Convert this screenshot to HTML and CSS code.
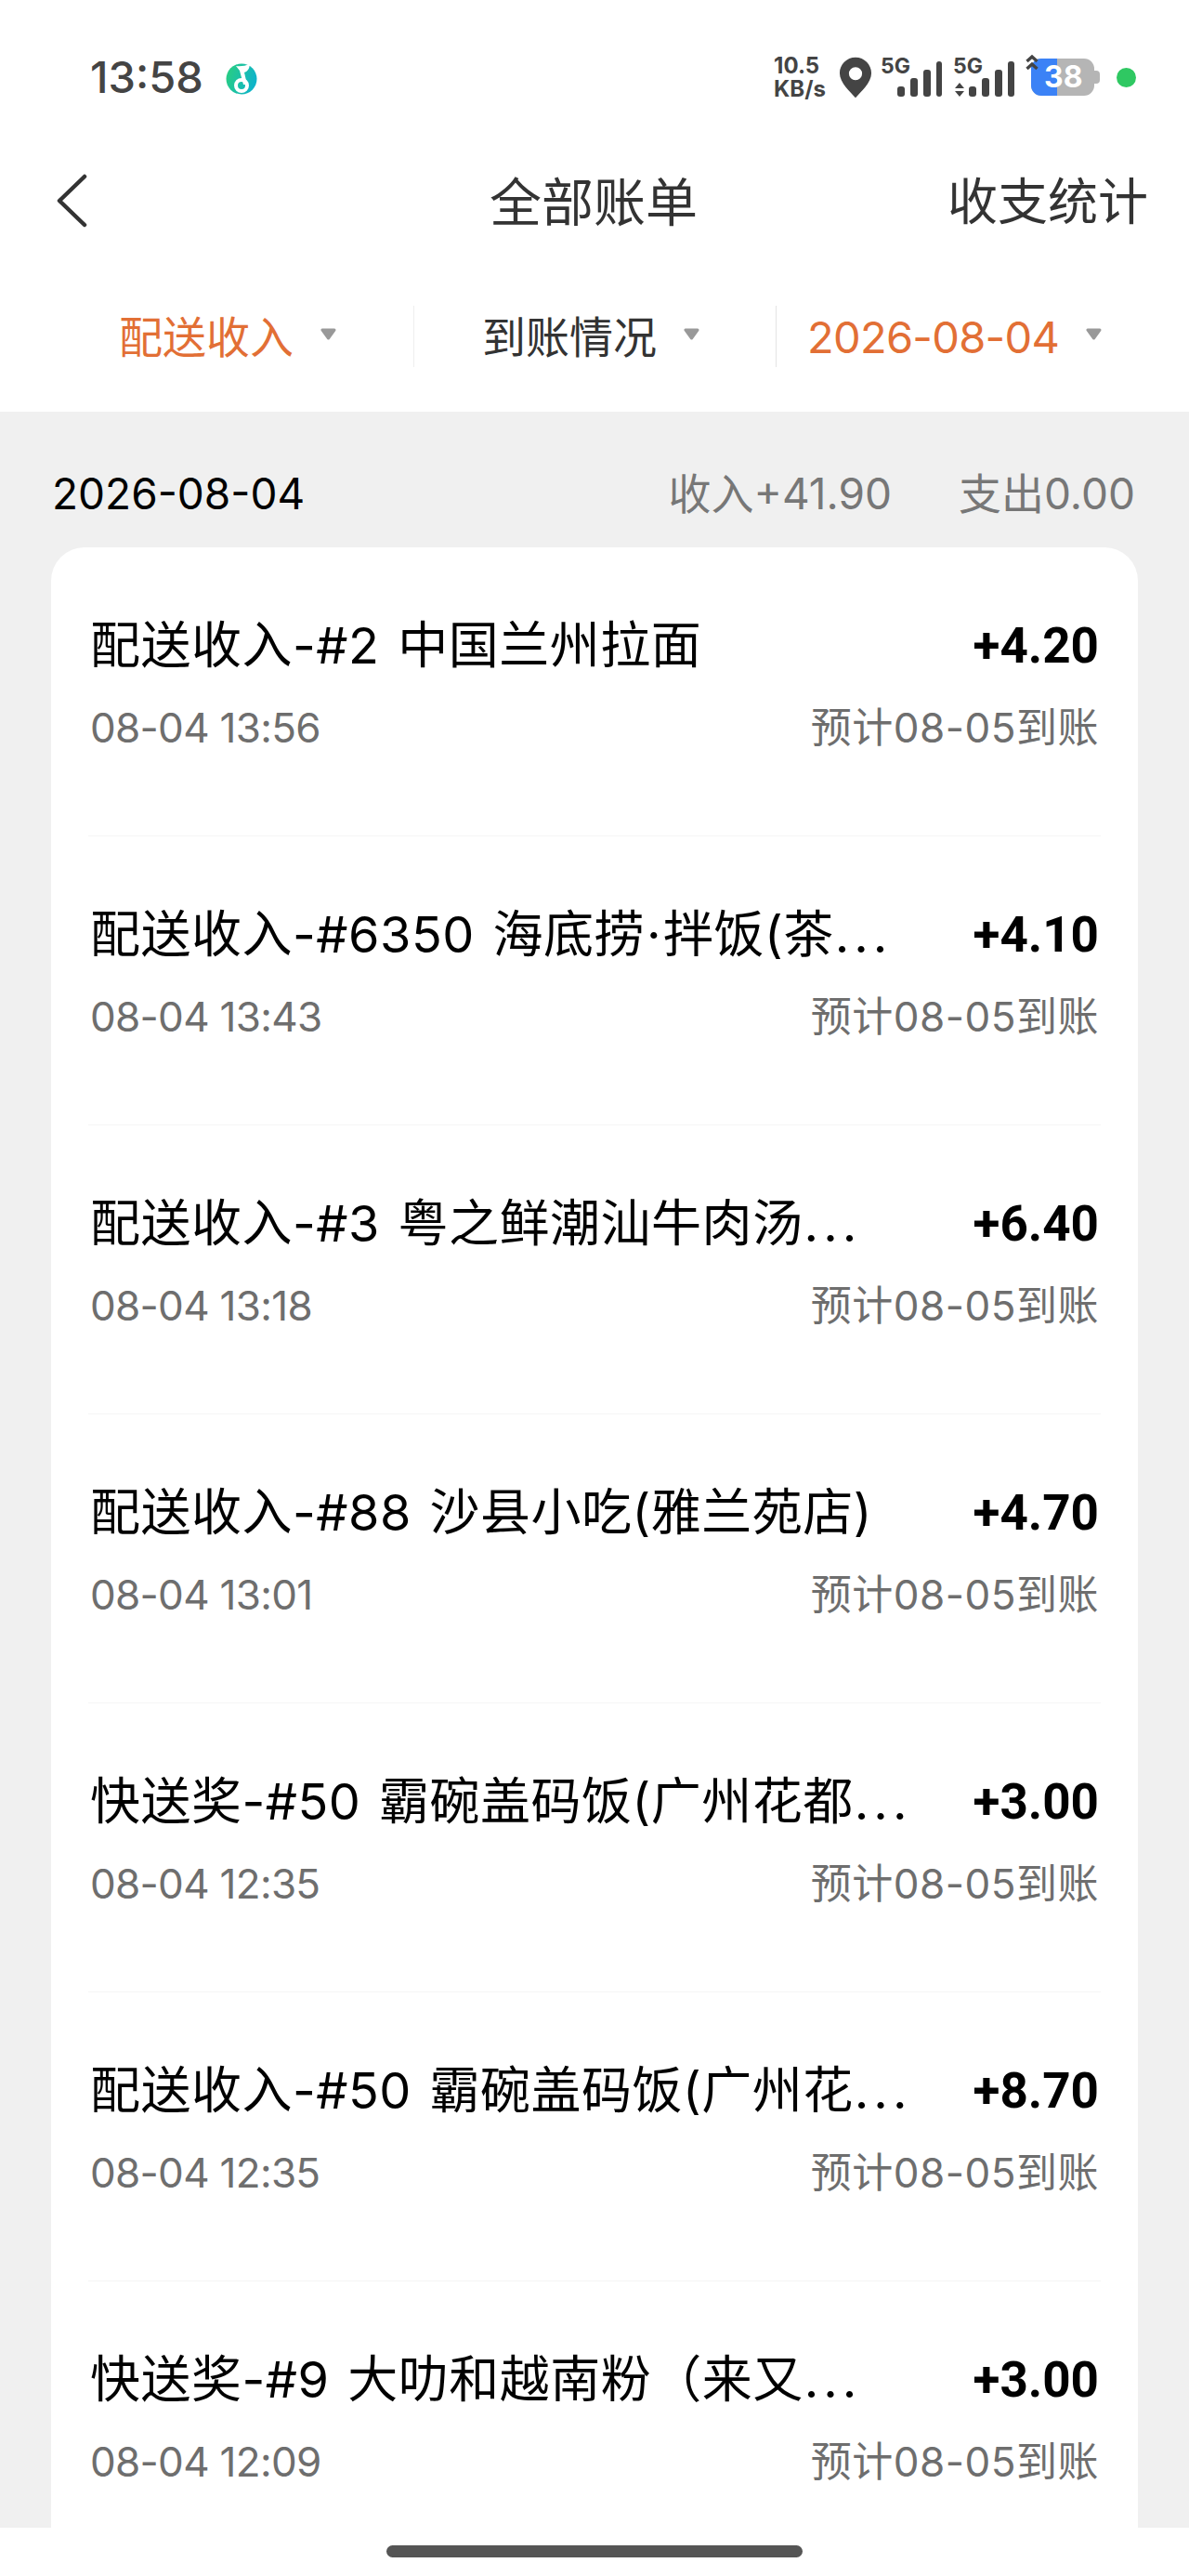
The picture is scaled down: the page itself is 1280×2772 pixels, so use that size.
FILE: index.html
```html
<!DOCTYPE html>
<html lang="zh-CN">
<head>
  <meta charset="UTF-8" />
  <title>全部账单</title>
  <link rel="stylesheet" href="styles.css">
</head>
<body>
  <div class="statusbar">
    <div class="status-left">
      <span class="clock">13:58</span>
      <svg class="music" width="34" height="34" viewBox="0 0 34 34">
        <defs>
          <linearGradient id="mg" x1="0" y1="0" x2="1" y2="0.3">
            <stop offset="0" stop-color="#2bd07c"/>
            <stop offset="1" stop-color="#0fb4c8"/>
          </linearGradient>
        </defs>
        <circle cx="17" cy="17" r="16.500" fill="url(#mg)"/>
        <circle cx="17" cy="24" r="6" fill="none" stroke="#fff" stroke-width="4"/>
        <path d="M11 3 Q18 4 26 1 Q25 9 20 10 L23 23 L19 23 L15 8 Z" fill="#fff"/>
      </svg>
    </div>
    <div class="status-right">
      <div class="speed"><span>10.5</span><span>KB/s</span></div>
      <svg class="pin" width="36" height="47" viewBox="0 0 38 48">
        <path fill-rule="evenodd" fill="#444" d="M19 1C9 1 1 9 1 19c0 11 12 21 18 28 6-7 18-17 18-28C37 9 29 1 19 1Zm0 11a7.500 7.500 0 1 1 0 15 7.500 7.500 0 0 1 0-15Z"/>
      </svg>
      <div class="signal">
        <span class="net">5G</span>
        <svg width="66" height="41" viewBox="0 0 66 41" fill="#444">
          <rect x="18" y="30" width="8" height="11" rx="3"/>
          <rect x="32" y="21" width="8" height="20" rx="3"/>
          <rect x="46" y="12" width="8" height="29" rx="3"/>
          <rect x="60" y="3" width="6" height="38" rx="3"/>
        </svg>
      </div>
      <div class="signal second">
        <span class="net">5G</span>
        <svg width="66" height="41" viewBox="0 0 66 41" fill="#444">
          <path d="M7 26 L12 32 L2 32 Z M7 41 L12 35 L2 35 Z"/>
          <rect x="17" y="30" width="8" height="11" rx="3"/>
          <rect x="31" y="21" width="8" height="20" rx="3"/>
          <rect x="45" y="12" width="8" height="29" rx="3"/>
          <rect x="59" y="3" width="7" height="38" rx="3"/>
        </svg>
      </div>
      <div class="battery">
        <div class="battery-fill"></div>
        <span class="battery-num">38</span>
        <svg class="charge" width="14" height="20" viewBox="0 0 14 20" fill="none" stroke="#444" stroke-width="3.400">
          <path d="M1.500 8 L7 3 L12.500 8"/>
          <path d="M1.500 16 L7 11 L12.500 16"/>
        </svg>
      </div>
      <span class="green-dot"></span>
    </div>
  </div>

  <div class="navbar">
    <svg class="back" width="34" height="58" viewBox="0 0 34 58" fill="none" stroke="#333" stroke-width="4.500" stroke-linecap="round" stroke-linejoin="round">
      <path d="M31 3 L4 29 L31 55"/>
    </svg>
    <h1>全部账单</h1>
    <span class="nav-link">收支统计</span>
  </div>

  <div class="filters">
    <div class="filter on first"><span>配送收入</span><svg class="caret" width="17" height="13" viewBox="0 0 17 13"><path d="M2 2 H15 L8.500 11 Z" fill="#999" stroke="#999" stroke-width="3" stroke-linejoin="round"/></svg></div>
    <div class="filter second"><span>到账情况</span><svg class="caret" width="17" height="13" viewBox="0 0 17 13"><path d="M2 2 H15 L8.500 11 Z" fill="#999" stroke="#999" stroke-width="3" stroke-linejoin="round"/></svg></div>
    <div class="filter on third"><span>2026-08-04</span><svg class="caret" width="17" height="13" viewBox="0 0 17 13"><path d="M2 2 H15 L8.500 11 Z" fill="#999" stroke="#999" stroke-width="3" stroke-linejoin="round"/></svg></div>
  </div>

  <div class="content">
    <div class="day-head">
      <span class="day">2026-08-04</span>
      <div class="totals"><span>收入+41.90</span><span>支出0.00</span></div>
    </div>

    <div class="card">
      <div class="row">
        <div class="line"><span class="title">配送收入-#2 中国兰州拉面</span><b>+4.20</b></div>
        <div class="line sub"><span class="time">08-04 13:56</span><span class="eta">预计08-05到账</span></div>
      </div>
      <div class="row">
        <div class="line"><span class="title">配送收入-#6350 海底捞<span class="mid">·</span>拌饭(茶<span class="more">...</span></span><b>+4.10</b></div>
        <div class="line sub"><span class="time">08-04 13:43</span><span class="eta">预计08-05到账</span></div>
      </div>
      <div class="row">
        <div class="line"><span class="title">配送收入-#3 粤之鲜潮汕牛肉汤<span class="more">...</span></span><b>+6.40</b></div>
        <div class="line sub"><span class="time">08-04 13:18</span><span class="eta">预计08-05到账</span></div>
      </div>
      <div class="row">
        <div class="line"><span class="title">配送收入-#88 沙县小吃(雅兰苑店)</span><b>+4.70</b></div>
        <div class="line sub"><span class="time">08-04 13:01</span><span class="eta">预计08-05到账</span></div>
      </div>
      <div class="row">
        <div class="line"><span class="title">快送奖-#50 霸碗盖码饭(广州花都<span class="more">...</span></span><b>+3.00</b></div>
        <div class="line sub"><span class="time">08-04 12:35</span><span class="eta">预计08-05到账</span></div>
      </div>
      <div class="row">
        <div class="line"><span class="title">配送收入-#50 霸碗盖码饭(广州花<span class="more">...</span></span><b>+8.70</b></div>
        <div class="line sub"><span class="time">08-04 12:35</span><span class="eta">预计08-05到账</span></div>
      </div>
      <div class="row">
        <div class="line"><span class="title">快送奖-#9 大叻和越南粉（来又<span class="more">...</span></span><b>+3.00</b></div>
        <div class="line sub"><span class="time">08-04 12:09</span><span class="eta">预计08-05到账</span></div>
      </div>
    </div>
  </div>

  <div class="homebar"><div class="pill"></div></div>
</body>
</html>
```

FILE: styles.css
```css
* {
  box-sizing: border-box;
}
html, body {
  margin: 0;
  height: 2772px;
  overflow: hidden;
}
body {
  display: flex;
  flex-direction: column;
  background: #fff;
  color: #000;
  font-family: "Inter", "Noto Sans CJK SC", sans-serif;
}
.statusbar {
  height: 166px;
  padding: 0 57px 0 97px;
  display: flex;
  justify-content: space-between;
  align-items: center;
}
.status-left {
  display: flex;
  align-items: center;
  gap: 24px;
}
.clock {
  font-size: 47px;
  line-height: 60px;
  font-weight: 500;
  color: #444;
}
.music {
  margin-top: 3px;
}
.status-right {
  display: flex;
  align-items: center;
}
.speed {
  display: flex;
  flex-direction: column;
  font-size: 24px;
  line-height: 25px;
  font-weight: 700;
  color: #444;
}
.pin {
  margin-left: 14px;
}
.signal {
  position: relative;
  margin-left: 9px;
  height: 41px;
}
.signal.second {
  margin-left: 12px;
}
.signal svg {
  display: block;
}
.net {
  position: absolute;
  left: 0;
  top: -3px;
  font-size: 23px;
  line-height: 22px;
  font-weight: 700;
  color: #444;
}
.battery {
  position: relative;
  width: 68px;
  height: 40px;
  margin-left: 18px;
  border-radius: 11px;
  background: #b5b5b5;
}
.battery:after {
  content: "";
  position: absolute;
  right: -6px;
  top: 13px;
  width: 6px;
  height: 14px;
  border-radius: 0 4px 4px 0;
  background: #b5b5b5;
}
.battery-fill {
  width: 28px;
  height: 100%;
  border-radius: 11px 0 0 11px;
  background: #3b82f6;
}
.battery-num {
  position: absolute;
  left: 14px;
  top: 0;
  font-size: 32px;
  line-height: 40px;
  font-weight: 700;
  color: #fff;
}
.charge {
  position: absolute;
  left: -6px;
  top: -5px;
}
.green-dot {
  width: 21px;
  height: 21px;
  margin-left: 24px;
  border-radius: 50%;
  background: #2fc862;
}
.navbar {
  height: 100px;
  padding: 0 44px 0 60px;
  display: flex;
  align-items: center;
  justify-content: space-between;
  position: relative;
}
.navbar h1 {
  margin: 0 0 5px;
  font-size: 56px;
  font-weight: 400;
  color: #333;
  position: absolute;
  left: -2px;
  right: 0;
  text-align: center;
}
.nav-link {
  margin-bottom: 5px;
  font-size: 54px;
  color: #333;
}
.filters {
  height: 177px;
  padding-top: 63px;
  display: flex;
  align-items: flex-start;
}
.filter {
  height: 66px;
  padding-bottom: 5px;
  display: flex;
  align-items: center;
  gap: 29px;
  font-size: 47px;
  color: #333;
}
.filter.first {
  width: 445px;
  padding-left: 128px;
}
.filter.second {
  width: 390px;
  padding-left: 73px;
  border-left: 1px solid #eee;
}
.filter.third {
  width: 445px;
  padding-left: 33px;
  padding-bottom: 0;
  border-left: 1px solid #e4e4e4;
  letter-spacing: -0.7px;
}
.filter.third .caret {
  margin-bottom: 5px;
}
.filter.on {
  color: #e26f35;
}
.content {
  flex: 1;
  min-height: 0;
  overflow: hidden;
  padding: 0 55px;
  background: #f0f0f0;
}
.day-head {
  height: 146px;
  padding: 30px 3px 0 1px;
  display: flex;
  align-items: center;
  justify-content: space-between;
  font-size: 46px;
  line-height: 60px;
}
.day {
  color: #000;
}
.totals {
  display: flex;
  gap: 72px;
  color: #777;
}
.card {
  background: #fff;
  border-radius: 36px 36px 0 0;
  padding: 0 40px;
}
.row {
  height: 311px;
  padding: 72px 2px 0;
  border-bottom: 1px solid #f5f5f5;
}
.row:last-child {
  border-bottom: 0;
}
.line {
  display: flex;
  justify-content: space-between;
  align-items: center;
  font-size: 54px;
  line-height: 68px;
  color: #000;
}
.title {
  letter-spacing: 0.5px;
  word-spacing: 4px;
}
.mid {
  margin: 0 2px;
}
.more {
  margin-left: 1px;
  letter-spacing: 5px;
}
.line b {
  font-family: "Roboto", sans-serif;
  font-size: 53px;
  font-weight: 700;
}
.sub {
  margin-top: 24px;
  font-size: 44px;
  line-height: 60px;
  color: #6e6e6e;
}
.time {
  letter-spacing: -0.7px;
}
.eta {
  letter-spacing: 0.5px;
}
.homebar {
  height: 52px;
  padding-top: 19px;
  background: #fff;
}
.pill {
  width: 448px;
  height: 13px;
  margin: 0 auto;
  border-radius: 7px;
  background: #555;
}
```
